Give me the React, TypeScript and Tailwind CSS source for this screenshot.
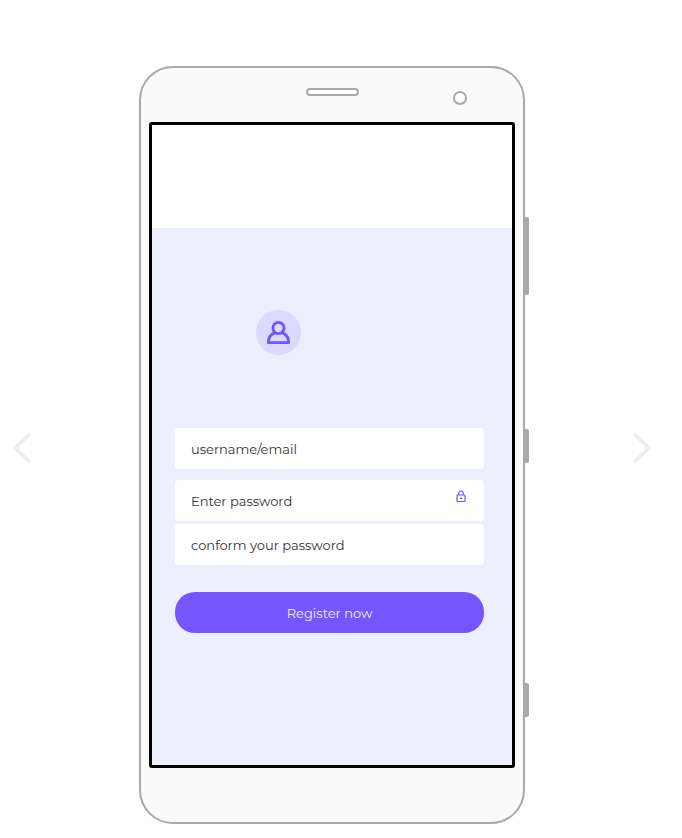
import type { InputHTMLAttributes, ReactNode } from "react";

type FieldProps = InputHTMLAttributes<HTMLInputElement> & { label: string; icon?: ReactNode };

function Field({ label, icon, ...rest }: FieldProps) {
  return (
    <div className="relative">
      <input
        {...rest}
        aria-label={label}
        placeholder={label}
        className="block h-[41px] w-full rounded-[4px] bg-white px-4 text-[13px] text-[#333333] outline-none placeholder:text-[#333333] placeholder:opacity-100"
      />
      {icon && <span className="absolute right-[18px] top-[10px]">{icon}</span>}
    </div>
  );
}

function UserIcon() {
  return (
    <svg width="25" height="25" viewBox="0 0 25 25" fill="none" stroke="#7455f8" strokeWidth="2.8" aria-hidden="true">
      <circle cx="12.5" cy="8" r="5.6" />
      <path d="M8.9 12.6C5 14.2 2.4 17.6 2.3 22.7H22.7C22.6 17.6 20 14.2 16.1 12.6" strokeLinejoin="round" />
    </svg>
  );
}

function LockIcon() {
  return (
    <svg width="10" height="13" viewBox="0 0 10 13" fill="none" stroke="#7654ff" aria-hidden="true">
      <rect x="1" y="5" width="8" height="6.5" rx="0.5" strokeWidth="1.2" />
      <path d="M2.7 5V3.3a2.3 2.3 0 0 1 4.6 0V5" strokeWidth="1.2" />
      <circle cx="5" cy="8.2" r="1" fill="#7654ff" stroke="none" />
    </svg>
  );
}

function Arrow({ direction }: { direction: "Previous" | "Next" }) {
  return (
    <button type="button" aria-label={direction} className="mt-1.5 shrink-0">
      <svg width="18" height="32" viewBox="0 0 18 32" fill="none" stroke="#ebebeb" strokeWidth="3.6" strokeLinejoin="round">
        <path d={direction === "Previous" ? "M17 1.5L2 16L17 30.5" : "M1 1.5L16 16L1 30.5"} />
      </svg>
    </button>
  );
}

function Phone({ children }: { children: ReactNode }) {
  return (
    <div className="relative w-[386px] rounded-[34px] border-2 border-[#a9a9a9] bg-[#fafafa] px-2 pb-[54px]">
      <div className="grid h-[54px] grid-cols-[1fr_auto_1fr] pt-5">
        <span className="col-start-2 h-2 w-[53px] rounded-full border-2 border-[#a9a9a9] bg-white" />
        <span className="mr-12 mt-[3px] size-3.5 justify-self-end rounded-full border-2 border-[#a9a9a9] bg-white" />
      </div>
      <main className="overflow-hidden rounded-[3px] border-[3px] border-black bg-white">{children}</main>
      <span className="absolute -right-1.5 top-[149px] h-[78px] w-[5px] rounded-r-[2px] bg-[#a9a9a9]" />
      <span className="absolute -right-1.5 top-[361px] h-[34px] w-[5px] rounded-r-[2px] bg-[#a9a9a9]" />
      <span className="absolute -right-1.5 top-[615px] h-[34px] w-[5px] rounded-r-[2px] bg-[#a9a9a9]" />
    </div>
  );
}

export default function App() {
  return (
    <div className="flex items-center justify-between bg-white pb-3.5 pl-[13px] pr-[31px] pt-[66px] font-['Montserrat','Inter',sans-serif]">
      <Arrow direction="Previous" />
      <Phone>
        <div className="mt-[103px] bg-[#edefff] pb-[132px] pl-[23px] pr-7 pt-[82px]">
          <div className="ml-[81px] flex size-[45px] items-center justify-center rounded-full bg-[#dcd8ff]">
            <UserIcon />
          </div>
          <form className="mt-[73px]" onSubmit={(event) => event.preventDefault()}>
            <Field label="username/email" name="username" autoComplete="username" />
            <div className="mt-[11px] flex flex-col gap-[3px]">
              <Field label="Enter password" type="password" name="password" autoComplete="new-password" icon={<LockIcon />} />
              <Field label="conform your password" type="password" name="confirm" autoComplete="new-password" />
            </div>
            <button type="submit" className="mt-[27px] h-[41px] w-full rounded-[20px] bg-[#7455ff] pt-0.5 text-[13px] text-[#edefff]">
              Register now
            </button>
          </form>
        </div>
      </Phone>
      <Arrow direction="Next" />
    </div>
  );
}
